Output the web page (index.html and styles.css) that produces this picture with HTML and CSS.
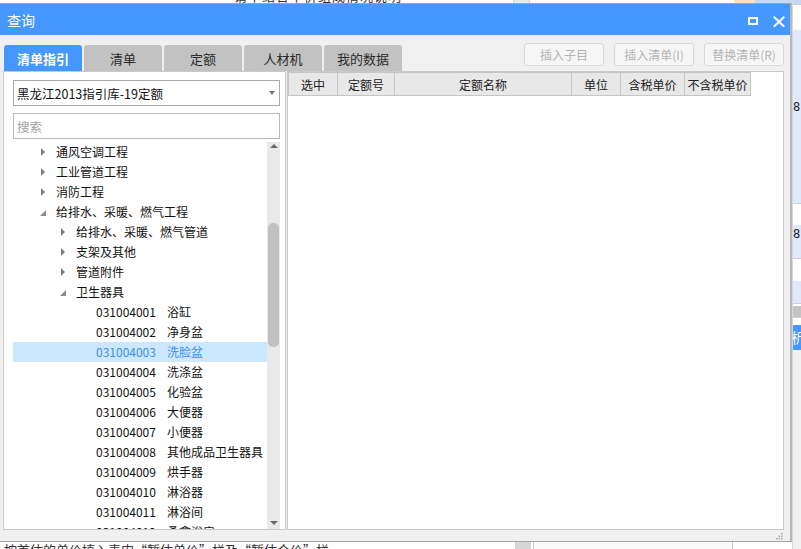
FILE: index.html
```html
<!DOCTYPE html>
<html lang="zh-CN">
<head>
<meta charset="utf-8">
<title>查询</title>
<link rel="stylesheet" href="styles.css">
</head>
<body>
<div class="page">
  <div class="page-top">
    <span class="top-text">请单结合单价组成情况说明</span>
    <span class="top-gray"></span>
    <span class="top-peach"></span>
    <span class="top-blue"></span>
  </div>
  <div class="page-side">
    <div class="side-block blue-top h4"></div>
    <div class="side-block white h26"></div>
    <div class="side-block pale h173"><span class="side-num n1">81</span></div>
    <div class="side-block white h22"></div>
    <div class="side-block pale h33"><span class="side-num n2">81</span></div>
    <div class="side-block white h23"></div>
    <div class="side-block pale h22"></div>
    <div class="side-block white h3"></div>
    <div class="side-block gray h11"></div>
    <div class="side-block white h8"></div>
    <div class="side-block blue h25"><span class="side-txt">析</span></div>
    <div class="side-block light hrest"></div>
  </div>
  <div class="page-bottom">
    <span class="bottom-text">按首估的单价填入表内“暂估单价”栏及“暂估合价”栏。</span>
    <span class="bottom-gray"></span>
    <span class="bottom-box"></span>
  </div>
</div>

<div class="dialog">
  <div class="titlebar">
    <span class="title">查询</span>
    <div class="winbtns">
      <svg class="wbtn" width="12" height="12" viewBox="0 0 12 12"><rect x="2" y="3" width="8" height="6" fill="none" stroke="#fff" stroke-width="2"/></svg>
      <svg class="wbtn" width="12" height="12" viewBox="0 0 12 12"><path d="M1.5 2.5 L10.5 11 M10.5 2.5 L1.5 11" stroke="#fff" stroke-width="2" stroke-linecap="square"/></svg>
    </div>
  </div>
  <div class="body">
    <div class="toolbar">
      <div class="tabs">
        <div class="tab active">清单指引</div>
        <div class="tab">清单</div>
        <div class="tab">定额</div>
        <div class="tab">人材机</div>
        <div class="tab">我的数据</div>
      </div>
      <div class="actions">
        <div class="btn">插入子目</div>
        <div class="btn">插入清单(I)</div>
        <div class="btn">替换清单(R)</div>
      </div>
    </div>
    <div class="content">
      <div class="left">
        <div class="select">
          <span>黑龙江2013指引库-19定额</span>
          <span class="caret"></span>
        </div>
        <div class="search">搜索</div>
        <div class="treebox">
          <div class="tree">
            <div class="row l1"><span class="tg closed"></span>通风空调工程</div>
            <div class="row l1"><span class="tg closed"></span>工业管道工程</div>
            <div class="row l1"><span class="tg closed"></span>消防工程</div>
            <div class="row l1"><span class="tg open"></span>给排水、采暖、燃气工程</div>
            <div class="row l2"><span class="tg closed"></span>给排水、采暖、燃气管道</div>
            <div class="row l2"><span class="tg closed"></span>支架及其他</div>
            <div class="row l2"><span class="tg closed"></span>管道附件</div>
            <div class="row l2"><span class="tg open"></span>卫生器具</div>
            <div class="row leaf"><span class="code">031004001</span>浴缸</div>
            <div class="row leaf"><span class="code">031004002</span>净身盆</div>
            <div class="row leaf selected"><span class="code">031004003</span>洗脸盆</div>
            <div class="row leaf"><span class="code">031004004</span>洗涤盆</div>
            <div class="row leaf"><span class="code">031004005</span>化验盆</div>
            <div class="row leaf"><span class="code">031004006</span>大便器</div>
            <div class="row leaf"><span class="code">031004007</span>小便器</div>
            <div class="row leaf"><span class="code">031004008</span>其他成品卫生器具</div>
            <div class="row leaf"><span class="code">031004009</span>烘手器</div>
            <div class="row leaf"><span class="code">031004010</span>淋浴器</div>
            <div class="row leaf"><span class="code">031004011</span>淋浴间</div>
            <div class="row leaf"><span class="code">031004012</span>桑拿浴房</div>
          </div>
          <div class="vscroll">
            <div class="arrow-area"><span class="arr-up"></span></div>
            <div class="track"><div class="thumb"></div></div>
            <div class="arrow-area bottom"><span class="arr-down"></span></div>
          </div>
        </div>
      </div>
      <div class="right">
        <div class="thead">
          <div class="th c1">选中</div>
          <div class="th c2">定额号</div>
          <div class="th c3">定额名称</div>
          <div class="th c4">单位</div>
          <div class="th c5">含税单价</div>
          <div class="th c6">不含税单价</div>
        </div>
      </div>
    </div>
    <div class="statusbar">
      <svg class="grip" width="7" height="7" viewBox="0 0 7 7">
        <rect x="5" y="0" width="1.5" height="1.5" fill="#a8a8a8"/>
        <rect x="2.5" y="2.5" width="1.5" height="1.5" fill="#a8a8a8"/>
        <rect x="5" y="2.5" width="1.5" height="1.5" fill="#a8a8a8"/>
        <rect x="0" y="5" width="1.5" height="1.5" fill="#a8a8a8"/>
        <rect x="2.5" y="5" width="1.5" height="1.5" fill="#a8a8a8"/>
        <rect x="5" y="5" width="1.5" height="1.5" fill="#a8a8a8"/>
      </svg>
    </div>
  </div>
</div>
</body>
</html>
```

FILE: styles.css
```css
* { box-sizing: border-box; }

html, body {
  margin: 0;
  padding: 0;
}

body {
  width: 801px;
  height: 549px;
  overflow: hidden;
  position: relative;
  background: #ffffff;
  font-family: "Noto Sans CJK SC", "Noto Sans", sans-serif;
  font-size: 12px;
  color: #1a1a1a;
}

/* ---------- background page (behind the dialog) ---------- */
.page {
  position: absolute;
  inset: 0;
}

.page-top {
  position: absolute;
  left: 0;
  top: 0;
  width: 801px;
  height: 4px;
  overflow: hidden;
}
.top-text {
  position: absolute;
  left: 234px;
  top: -14px;
  font-size: 13px;
  color: #333;
  letter-spacing: 1px;
}
.top-gray {
  position: absolute;
  left: 513px;
  top: 0;
  width: 17px;
  height: 4px;
  background: #e6eaea;
  border-left: 1px solid #cfd4d4;
  border-right: 1px solid #cfd4d4;
}
.top-peach {
  position: absolute;
  left: 734px;
  top: 0;
  width: 21px;
  height: 4px;
  background: #fde2c4;
}
.top-blue {
  position: absolute;
  left: 755px;
  top: 0;
  width: 46px;
  height: 4px;
  background: #c6d9f6;
}

.page-side {
  position: absolute;
  left: 792px;
  top: 0;
  width: 9px;
  height: 549px;
  display: flex;
  flex-direction: column;
  overflow: hidden;
  border-left: 1px solid #d8d8d8;
}
.side-block { width: 100%; flex: none; overflow: hidden; position: relative; }
.pale { background: #dfe9fb; }
.white { background: #ffffff; border-top: 1px solid #d0d0d0; }
.gray { background: #c4c4c4; }
.blue { background: #4598ff; }
.blue-top { background: #c6d9f6; }
.light { background: #f0f0f0; }
.h3 { height: 3px; }
.h4 { height: 4px; }
.h8 { height: 8px; }
.h11 { height: 11px; }
.h22 { height: 22px; }
.h23 { height: 23px; }
.h25 { height: 25px; }
.h26 { height: 26px; }
.h33 { height: 33px; }
.h173 { height: 173px; }
.hrest { flex: 1; }
.side-num {
  position: absolute;
  left: 0;
  font-family: "DejaVu Sans Mono", monospace;
  font-size: 12px;
  line-height: 12px;
  color: #222;
}
.n1 { top: 71px; }
.n2 { top: 3px; }
.side-txt {
  position: absolute;
  left: -2px;
  top: 4px;
  color: #fff;
  font-size: 14px;
  line-height: 16px;
}

.page-bottom {
  position: absolute;
  left: 0;
  top: 542px;
  width: 792px;
  height: 7px;
  overflow: hidden;
  background: #ffffff;
}
.bottom-text {
  position: absolute;
  left: 4px;
  top: -1px;
  font-size: 13px;
  line-height: 18px;
  color: #333;
  white-space: nowrap;
}
.bottom-gray {
  position: absolute;
  left: 515px;
  top: 0;
  width: 16px;
  height: 7px;
  background: #d6d6d6;
}
.bottom-box {
  position: absolute;
  left: 533px;
  top: 0;
  width: 200px;
  height: 7px;
  border-left: 1px solid #c8c8c8;
  border-right: 1px solid #c8c8c8;
  background: #fafafa;
}

/* ---------- dialog window ---------- */
.dialog {
  position: absolute;
  left: 0;
  top: 3px;
  width: 792px;
  height: 539px;
  background: #f0f0f0;
  border-top: 1px solid #a4a4a4;
  border-right: 2px solid #b8b8b8;
  border-bottom: 1px solid #a4a4a4;
  display: flex;
  flex-direction: column;
}

.titlebar {
  height: 31px;
  flex: none;
  background: #4598ff;
  display: flex;
  align-items: center;
  padding: 0 5px 0 7px;
}
.title {
  color: #ffffff;
  font-size: 14px;
  line-height: 16px;
  margin-top: 1px;
}
.winbtns {
  margin-left: auto;
  display: flex;
  gap: 14px;
  align-items: center;
  margin-top: 2px;
}
.wbtn { display: block; }

.body {
  flex: 1;
  display: flex;
  flex-direction: column;
  padding: 0 6px 0 3px;
}

.toolbar {
  height: 36px;
  flex: none;
  padding-top: 8px;
  display: flex;
  align-items: flex-end;
}
.tabs {
  display: flex;
  gap: 2px;
  margin-left: 1px;
}
.tab {
  width: 78px;
  height: 26px;
  background: #c2c2c2;
  color: #2a2a2a;
  border-radius: 3px 3px 0 0;
  display: flex;
  align-items: center;
  justify-content: center;
  font-size: 13px;
}
.tab.active {
  background: #4598ff;
  color: #ffffff;
  font-weight: bold;
}
.actions {
  margin-left: auto;
  align-self: flex-start;
  display: flex;
  gap: 10px;
}
.btn {
  width: 80px;
  height: 23px;
  border: 1px solid #d8d8d8;
  border-radius: 3px;
  background: #f6f6f6;
  color: #b4b4b4;
  display: flex;
  align-items: center;
  justify-content: center;
  font-size: 12px;
}

.content {
  height: 459px;
  flex: none;
  display: flex;
  gap: 1px;
}

.left {
  width: 283px;
  height: 100%;
  background: #ffffff;
  border: 1px solid #c9c9c9;
  padding: 8px 5px 0 9px;
  display: flex;
  flex-direction: column;
}
.select {
  height: 26px;
  flex: none;
  border: 1px solid #a9a9a9;
  display: flex;
  align-items: center;
  padding-left: 3px;
  padding-right: 4px;
  color: #111;
  font-size: 12.5px;
}
.caret {
  margin-left: auto;
  width: 0;
  height: 0;
  border-left: 3.5px solid transparent;
  border-right: 3.5px solid transparent;
  border-top: 4px solid #7a7a7a;
}
.search {
  height: 26px;
  flex: none;
  margin-top: 7px;
  border: 1px solid #b9b9b9;
  display: flex;
  align-items: center;
  padding-left: 3px;
  color: #a2a2a2;
  font-size: 12.5px;
}
.treebox {
  margin-top: 3px;
  flex: 1;
  display: flex;
  min-height: 0;
}
.tree {
  flex: 1;
  overflow: hidden;
}
.row {
  height: 20px;
  line-height: 20px;
  display: flex;
  align-items: center;
  white-space: nowrap;
  color: #111;
  font-size: 12px;
}
.row.l1 { padding-left: 27px; }
.row.l2 { padding-left: 47px; }
.row.leaf { padding-left: 83px; }
.row.selected {
  background: #cce8ff;
  color: #3f8fe6;
}
.tg {
  width: 16px;
  height: 20px;
  flex: none;
  position: relative;
}
.tg.closed::before {
  content: "";
  position: absolute;
  left: 1px;
  top: 6px;
  width: 0;
  height: 0;
  border-top: 4px solid transparent;
  border-bottom: 4px solid transparent;
  border-left: 4px solid #7c7c7c;
}
.tg.open::before {
  content: "";
  position: absolute;
  left: 0;
  top: 8px;
  width: 0;
  height: 0;
  border-left: 6px solid transparent;
  border-bottom: 6px solid #8a8a8a;
}
.code {
  width: 71px;
  flex: none;
}

.vscroll {
  width: 13px;
  flex: none;
  background: #e9e9e9;
  display: flex;
  flex-direction: column;
}
.arrow-area {
  height: 14px;
  flex: none;
  display: flex;
  justify-content: center;
  padding-top: 2px;
}
.arrow-area.bottom {
  padding-top: 6px;
}
.arr-up {
  width: 0;
  height: 0;
  border-left: 4px solid transparent;
  border-right: 4px solid transparent;
  border-bottom: 4px solid #6a6a6a;
}
.arr-down {
  width: 0;
  height: 0;
  border-left: 4px solid transparent;
  border-right: 4px solid transparent;
  border-top: 4px solid #6a6a6a;
}
.track {
  flex: 1;
  padding: 0 1px;
}
.thumb {
  margin-top: 67px;
  height: 124px;
  background: #c1c1c1;
  border-radius: 5px;
}

.right {
  width: 497px;
  height: 100%;
  background: #ffffff;
  border: 1px solid #c9c9c9;
}
.thead {
  display: flex;
  height: 24px;
  width: max-content;
  border: 1px solid #c6c6c6;
  border-right: none;
  background: #e8e8e8;
}
.th {
  height: 100%;
  border-right: 1px solid #c6c6c6;
  display: flex;
  align-items: center;
  justify-content: center;
  font-size: 12px;
  color: #222;
  white-space: nowrap;
}
.c1 { width: 49px; }
.c2 { width: 57px; }
.c3 { width: 177px; }
.c4 { width: 49px; }
.c5 { width: 64px; }
.c6 { width: 66px; }

.statusbar {
  height: 11px;
  flex: none;
  display: flex;
  justify-content: flex-end;
  align-items: flex-end;
  padding-right: 1px;
  padding-bottom: 1px;
}
.grip { display: block; }
```
